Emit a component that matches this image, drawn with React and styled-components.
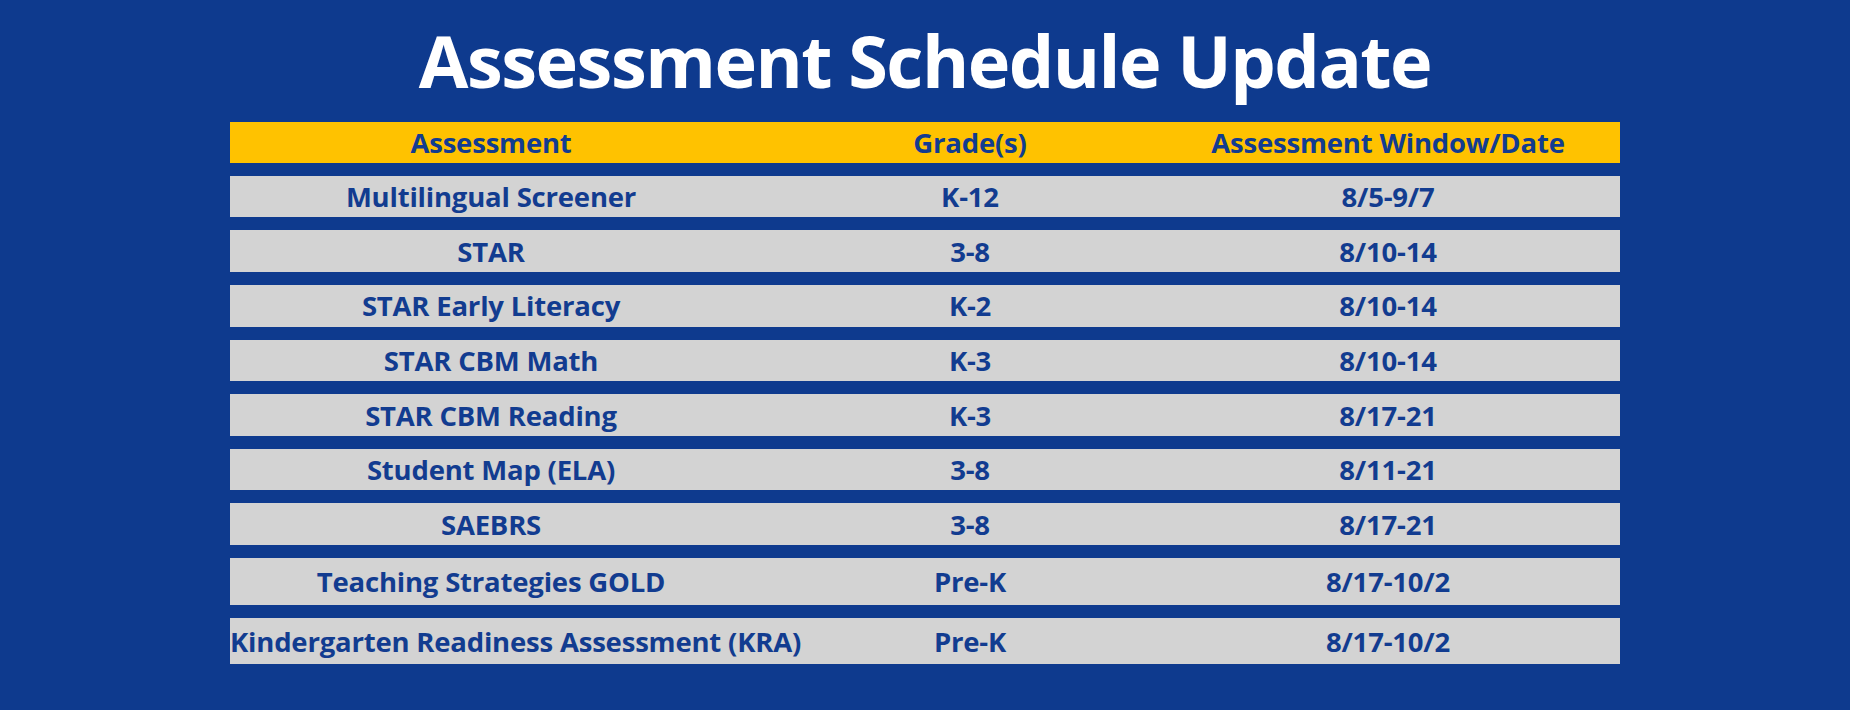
import React from "react";
import styled, { createGlobalStyle } from "styled-components";

const schedule = [
  { name: "Multilingual Screener", grades: "K-12", window: "8/5-9/7" },
  { name: "STAR", grades: "3-8", window: "8/10-14" },
  { name: "STAR Early Literacy", grades: "K-2", window: "8/10-14" },
  { name: "STAR CBM Math", grades: "K-3", window: "8/10-14" },
  { name: "STAR CBM Reading", grades: "K-3", window: "8/17-21" },
  { name: "Student Map (ELA)", grades: "3-8", window: "8/11-21" },
  { name: "SAEBRS", grades: "3-8", window: "8/17-21" },
  { name: "Teaching Strategies GOLD", grades: "Pre-K", window: "8/17-10/2", tall: true },
  { name: "Kindergarten Readiness Assessment (KRA)", grades: "Pre-K", window: "8/17-10/2", tall: true },
];

const GlobalStyle = createGlobalStyle`
  html, body {
    margin: 0;
    padding: 0;
    background: #0e3a8e;
  }
`;

const App = () => {
  return (
    <>
      <GlobalStyle />
      <Page>
        <Title>Assessment Schedule Update</Title>

        <Table>
          <HeaderRow>
            <Cell>Assessment</Cell>
            <Cell>Grade(s)</Cell>
            <Cell>Assessment Window/Date</Cell>
          </HeaderRow>

          <Body>
            {schedule.map((item) => (
              <Row key={item.name} $tall={item.tall}>
                <Cell>{item.name}</Cell>
                <Cell>{item.grades}</Cell>
                <Cell>{item.window}</Cell>
              </Row>
            ))}
          </Body>
        </Table>
      </Page>
    </>
  );
};

const Page = styled.div`
  width: 1850px;
  height: 710px;
  box-sizing: border-box;
  padding-top: 24px;
  background: #0e3a8e;
  display: flex;
  flex-direction: column;
  align-items: center;
  font-family: "Open Sans", "Liberation Sans", sans-serif;
`;

const Title = styled.h1`
  margin: 0;
  height: 74px;
  color: #ffffff;
  font-size: 72px;
  line-height: 1;
  font-weight: 700;
  letter-spacing: -1.5px;
`;

const Table = styled.div`
  width: 1390px;
  margin-top: 23.5px;
  display: flex;
  flex-direction: column;
  gap: 12.8px;
`;

const Body = styled.div`
  display: flex;
  flex-direction: column;
  gap: 13px;
`;

const Row = styled.div`
  display: grid;
  grid-template-columns: 522px 436px 400px;
  align-items: center;
  height: ${(p) => (p.$tall ? "46.7px" : "41.6px")};
  background: #d3d3d3;
  color: #123c90;
`;

const HeaderRow = styled(Row)`
  background: #ffc200;
`;

const Cell = styled.div`
  text-align: center;
  white-space: nowrap;
  font-size: 27.5px;
  font-weight: 700;
  letter-spacing: -0.2px;
`;

export default App;
